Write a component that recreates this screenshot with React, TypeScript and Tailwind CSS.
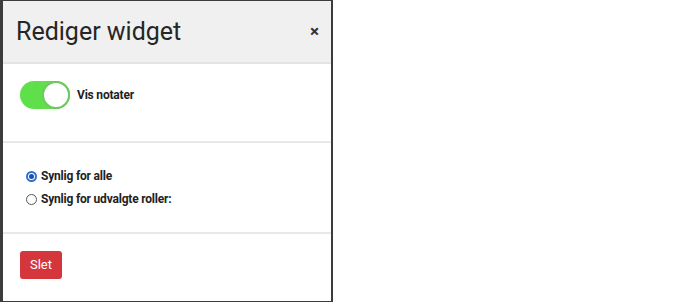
import { useState } from "react";

export default function App() {
  const [showNotes, setShowNotes] = useState(true);
  const [visibility, setVisibility] = useState<"all" | "roles">("all");

  return (
    <div className="h-[302px] w-[674px] bg-white font-['Roboto',sans-serif] text-[#222]">
      <div className="flex h-[302px] w-[333px] flex-col border-y border-r-2 border-l-[3px] border-[#3c3c3c] bg-white">
        <div className="flex h-[63px] shrink-0 items-center justify-between border-b-2 border-[#e4e4e4] bg-[#f0f0f0] pl-[13px] pr-[12px]">
          <h1 className="text-[25px] leading-none text-[#262626]">Rediger widget</h1>
          <button className="text-[17px] font-bold leading-none text-[#333]">×</button>
        </div>

        <div className="h-[79px] shrink-0 border-b-2 border-[#e8e8e8] pl-[17px] pt-[17px]">
          <label className="flex items-center gap-[7px]">
            <button
              onClick={() => setShowNotes(!showNotes)}
              className="relative h-[28px] w-[50px] rounded-full bg-[#5fe04a]"
            >
              <span className="absolute right-0 top-0 h-[28px] w-[28px] rounded-full border-2 border-[#6cc95a] bg-white" />
            </button>
            <span className="text-[12px] font-bold tracking-[-0.2px] text-[#222]">Vis notater</span>
          </label>
        </div>

        <div className="flex h-[91px] shrink-0 flex-col gap-[5px] border-b-2 border-[#e8e8e8] pl-[23px] pt-[24px]">
          <Radio
            label="Synlig for alle"
            checked={visibility === "all"}
            onClick={() => setVisibility("all")}
          />
          <Radio
            label="Synlig for udvalgte roller:"
            checked={visibility === "roles"}
            onClick={() => setVisibility("roles")}
          />
        </div>

        <div className="pl-[17px] pt-[17px]">
          <button className="h-[28px] w-[42px] rounded-[3px] bg-[#d4363c] text-[13px] text-white">
            Slet
          </button>
        </div>
      </div>
    </div>
  );
}

function Radio({
  label,
  checked,
  onClick,
}: {
  label: string;
  checked: boolean;
  onClick: () => void;
}) {
  return (
    <label className="flex items-center gap-[4px]" onClick={onClick}>
      <span
        className={
          checked
            ? "flex h-[11px] w-[11px] items-center justify-center rounded-full border-2 border-[#2f6fd1]"
            : "flex h-[11px] w-[11px] items-center justify-center rounded-full border border-[#555]"
        }
      >
        {checked && <span className="h-[5px] w-[5px] rounded-full bg-[#1f4fa8]" />}
      </span>
      <span className="text-[12px] font-bold tracking-[-0.2px] text-[#222]">{label}</span>
    </label>
  );
}
